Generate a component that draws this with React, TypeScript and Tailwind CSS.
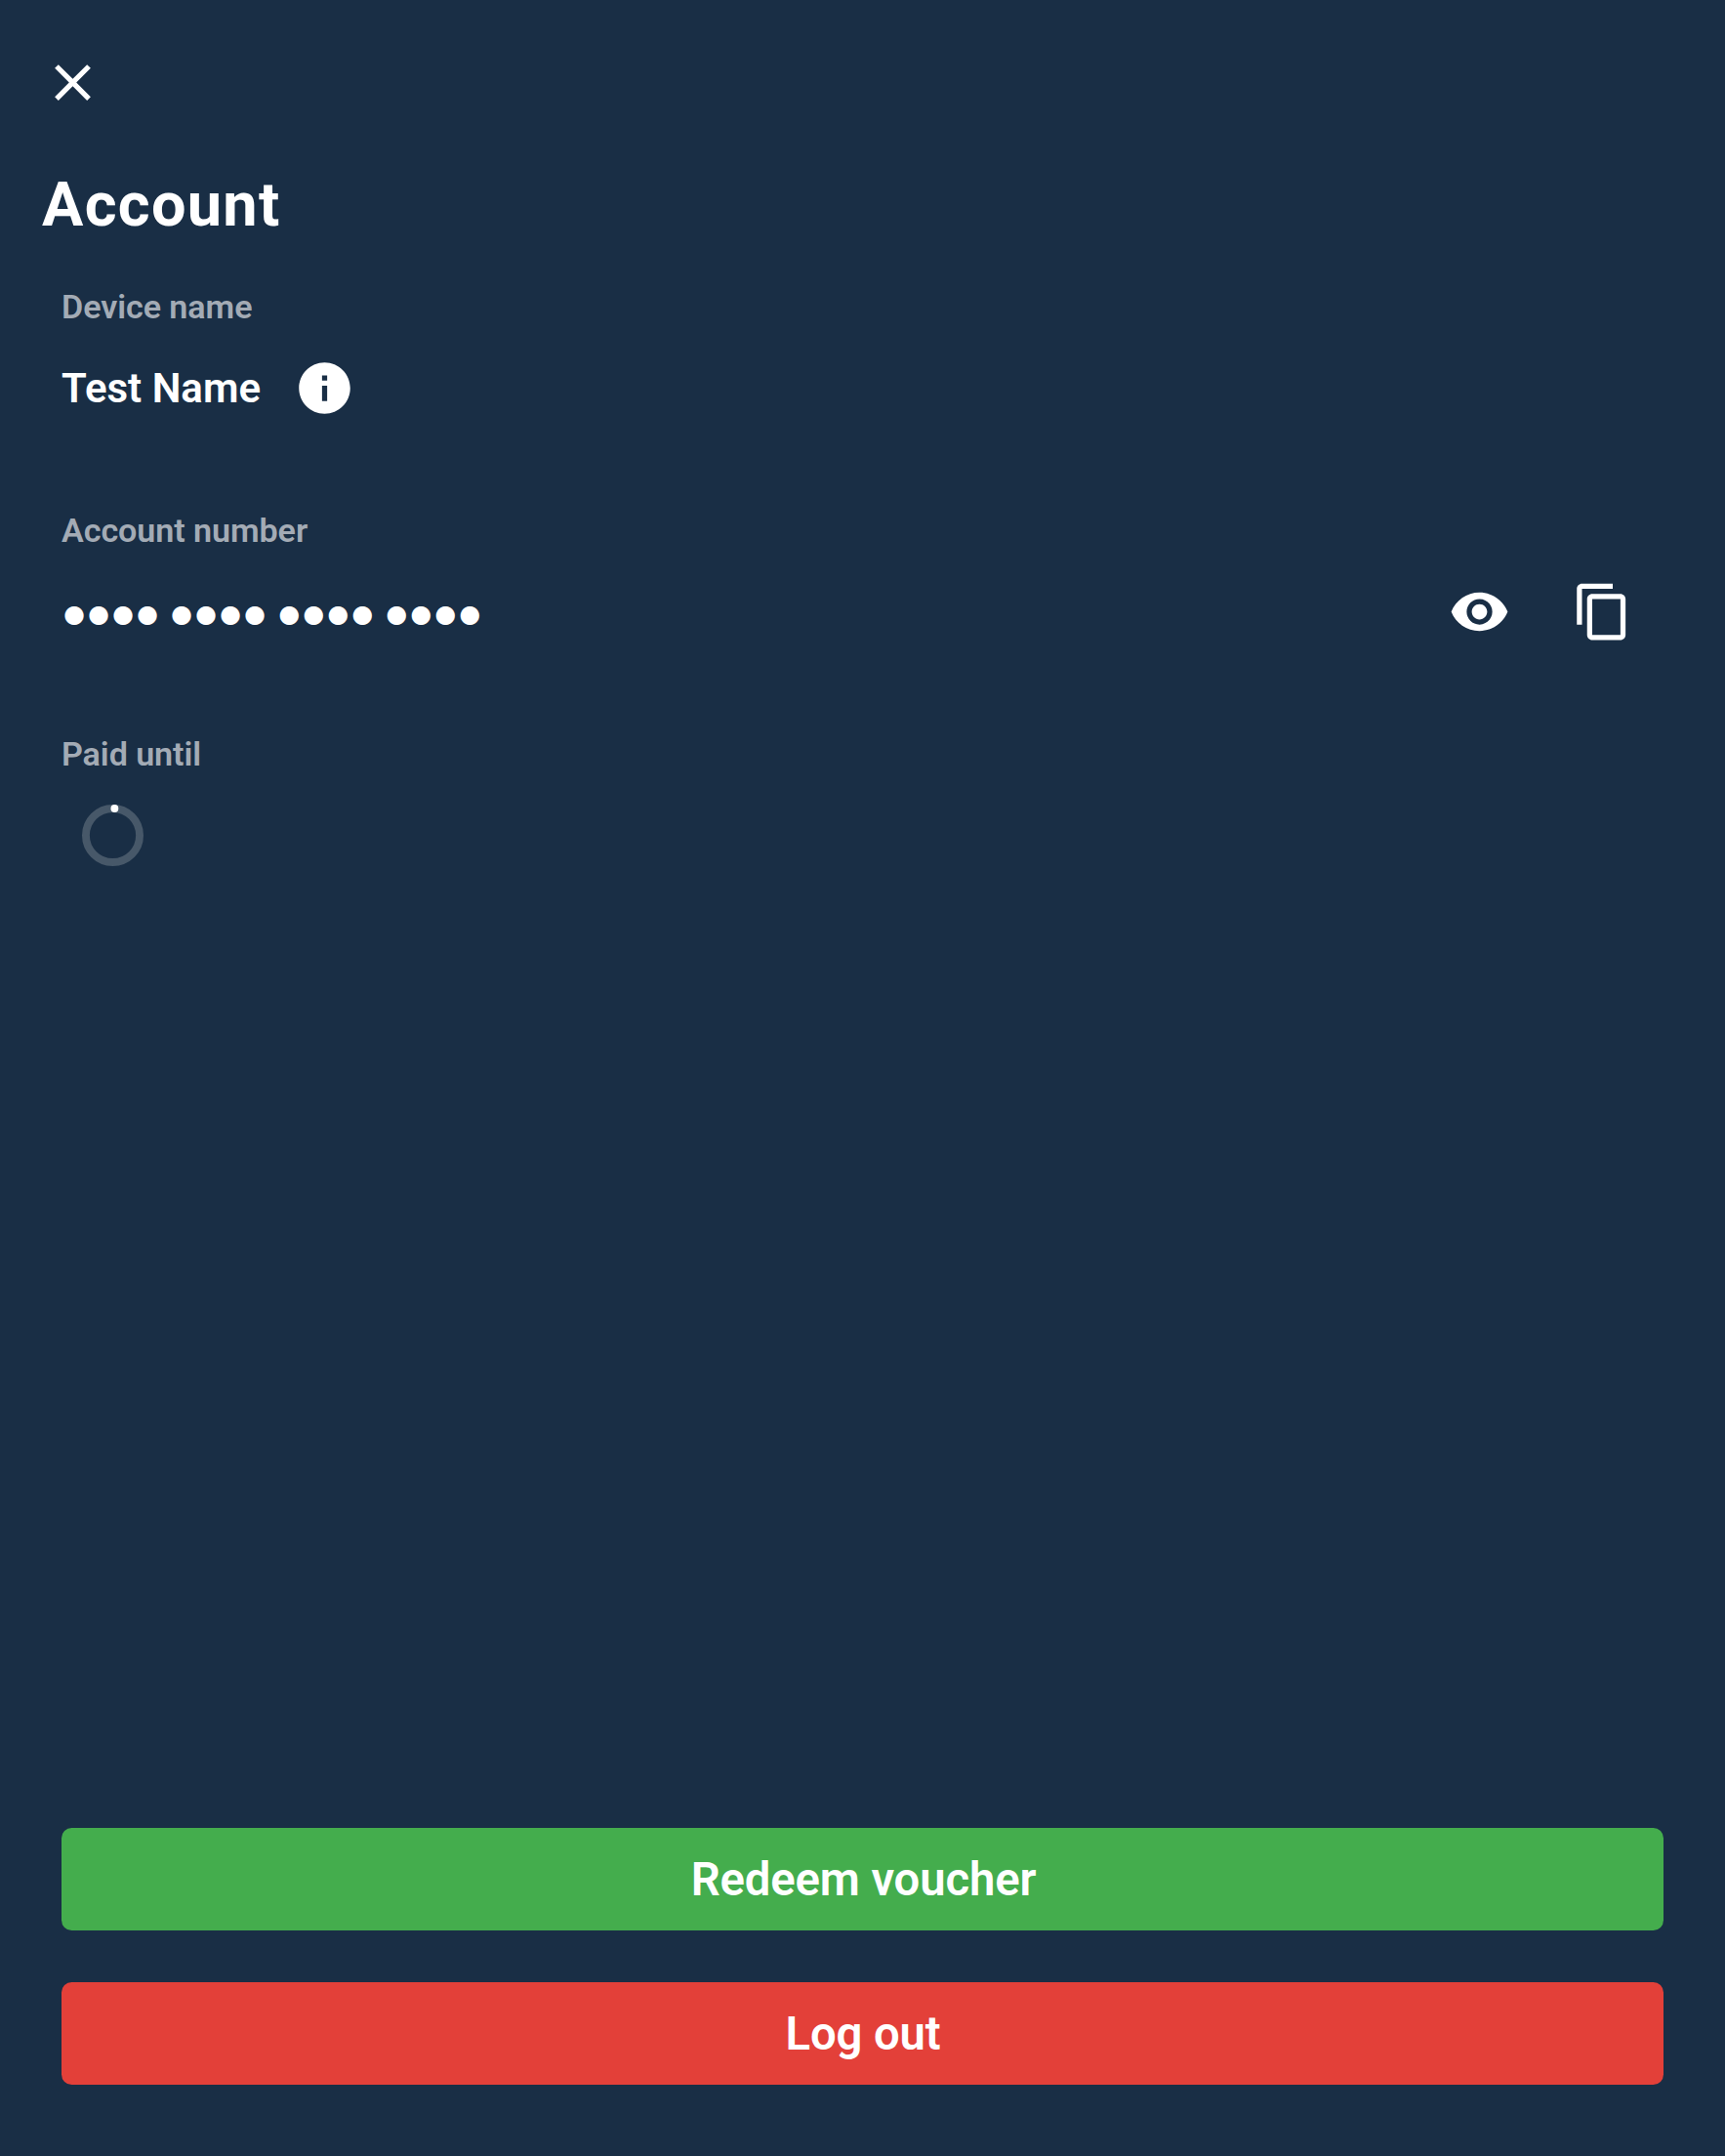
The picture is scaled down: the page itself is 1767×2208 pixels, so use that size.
import type { ReactNode } from 'react';

function Icon({ d }: { d: string }) {
  return (
    <svg viewBox="0 0 24 24" className="size-[63px] shrink-0 fill-white" aria-hidden="true">
      <path d={d} />
    </svg>
  );
}

const icons = {
  close: 'M19 6.41 17.59 5 12 10.59 6.41 5 5 6.41 10.59 12 5 17.59 6.41 19 12 13.41 17.59 19 19 17.59 13.41 12z',
  info: 'M12 2C6.48 2 2 6.48 2 12s4.48 10 10 10 10-4.48 10-10S17.52 2 12 2zm1 15h-2v-6h2v6zm0-8h-2V7h2v2z',
  eye: 'M12 4.5C7 4.5 2.73 7.61 1 12c1.73 4.39 6 7.5 11 7.5s9.27-3.11 11-7.5c-1.73-4.39-6-7.5-11-7.5zM12 17c-2.76 0-5-2.24-5-5s2.24-5 5-5 5 2.24 5 5-2.24 5-5 5zm0-8c-1.66 0-3 1.34-3 3s1.34 3 3 3 3-1.34 3-3-1.34-3-3-3z',
  copy: 'M16 1H4c-1.1 0-2 .9-2 2v14h2V3h12V1zm3 4H8c-1.1 0-2 .9-2 2v14c0 1.1.9 2 2 2h11c1.1 0 2-.9 2-2V7c0-1.1-.9-2-2-2zm0 16H8V7h11v14z',
};

function Section({ label, children }: { label: string; children: ReactNode }) {
  return (
    <section className="h-[229px] pl-[63px]">
      <h2 className="h-10 text-[34.125px] leading-10 font-semibold tracking-[-0.08px] text-[#a3abb5]">{label}</h2>
      <div className="flex h-[126px] items-center">{children}</div>
    </section>
  );
}

export default function App() {
  return (
    <main className="flex h-[2208px] w-full flex-col bg-[#192e45] pb-[73px] font-['Roboto',sans-serif] text-white">
      <header className="flex flex-col pt-[53px] pl-[43px]">
        <button aria-label="Close" className="size-[63px]">
          <Icon d={icons.close} />
        </button>
        <h1 className="mt-[57px] mb-[47px] h-[74px] text-[63px] leading-[74px] font-bold tracking-[1.31px]">Account</h1>
      </header>

      <Section label="Device name">
        <span className="mt-0.5 text-[42px] leading-[50px] font-semibold">Test Name</span>
        <button aria-label="Device information" className="ml-[34px]">
          <Icon d={icons.info} />
        </button>
      </Section>

      <Section label="Account number">
        <span className="mt-[5px] ml-[2.2px] font-['DejaVu_Sans',sans-serif] text-[25px] leading-[50px] tracking-[3.2px] whitespace-pre [word-spacing:-1.1px]">●●●● ●●●● ●●●● ●●●●</span>
        <div className="mr-[94px] ml-auto flex gap-[63px]">
          <button aria-label="Show account number">
            <Icon d={icons.eye} />
          </button>
          <button aria-label="Copy account number">
            <Icon d={icons.copy} />
          </button>
        </div>
      </Section>

      <Section label="Paid until">
        <svg viewBox="0 0 63 63" className="ml-[21px] size-[63px]" role="img" aria-label="Loading">
          <circle cx="31.5" cy="31.5" r="27.56" fill="none" stroke="#475869" strokeWidth="7.875" />
          <circle cx="33.4" cy="4" r="3.94" fill="#fff" />
        </svg>
      </Section>

      <div className="mx-[63px] mt-auto flex flex-col gap-[53px] text-[47.25px] leading-[56px] font-semibold tracking-[-0.13px]">
        <button className="h-[105px] rounded-[10.5px] bg-[#44ad4d] pl-[2px]">Redeem voucher</button>
        <button className="h-[105px] rounded-[10.5px] bg-[#e34039] pl-px">Log out</button>
      </div>
    </main>
  );
}
